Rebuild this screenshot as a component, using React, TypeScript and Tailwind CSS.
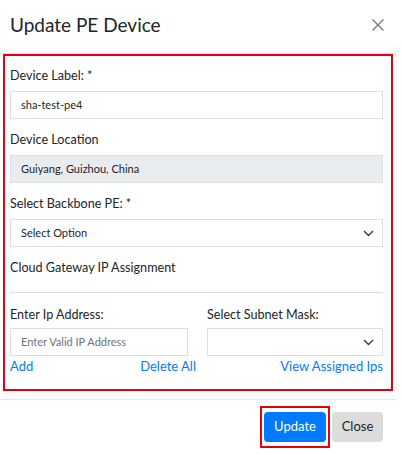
const font = { fontFamily: 'Lato, "Noto Sans", Arial, sans-serif' }

const Chevron = () => (
  <svg width="11" height="7" viewBox="0 0 11 7" fill="none" className="shrink-0">
    <path d="M1 1l4.5 4.5L10 1" stroke="#343a40" strokeWidth="1.4" />
  </svg>
)

const Label = ({ children, className = '' }: { children: React.ReactNode; className?: string }) => (
  <div className={`text-[12.6px] font-normal leading-[20px] text-[#212529] ${className}`}>{children}</div>
)

const TextBox = ({ value, muted, disabled, className = '' }: { value: string; muted?: boolean; disabled?: boolean; className?: string }) => (
  <div
    className={`flex h-[28px] items-center border border-[#dcdfe3] px-[10px] text-[11px] ${
      disabled ? 'bg-[#e9ecef]' : 'bg-white'
    } ${muted ? 'text-[#6c757d]' : 'text-[#212529]'} ${className}`}
  >
    {value}
  </div>
)

const SelectBox = ({ value, className = '' }: { value?: string; className?: string }) => (
  <div
    className={`flex h-[28px] items-center justify-between border border-[#dcdfe3] bg-white pl-[10px] pr-[8px] text-[11px] text-[#212529] ${className}`}
  >
    <span>{value}</span>
    <Chevron />
  </div>
)

export default function App() {
  return (
    <div className="h-[455px] w-[402px] bg-white" style={font}>
      <div className="w-[396px]">
        <header className="flex h-[54px] items-center justify-between border-b border-[#e5e7ea] pb-[4px] pl-[10px] pr-[12px]">
          <h1 className="text-[19px] font-normal leading-[20px] text-[#212529]">Update PE Device</h1>
          <button className="flex h-[12px] w-[12px] items-center justify-center">
            <svg width="12" height="12" viewBox="0 0 12 12">
              <path d="M0.5 0.5l11 11M11.5 0.5l-11 11" stroke="#6c757d" strokeWidth="1.2" />
            </svg>
          </button>
        </header>

        <div className="pb-[8px] pl-[3px] pr-[3px]">
          <div className="border-[2px] border-[#e4000f] pb-[13px] pl-[5px] pr-[8px] pt-[10px]">
            <Label className="mb-[5px]">Device Label: *</Label>
            <TextBox value="sha-test-pe4" className="mb-[11px]" />

            <Label className="mb-[5px]">Device Location</Label>
            <TextBox value="Guiyang, Guizhou, China" disabled className="mb-[11px]" />

            <Label className="mb-[5px]">Select Backbone PE: *</Label>
            <SelectBox value="Select Option" className="mb-[11px]" />

            <Label>Cloud Gateway IP Assignment</Label>
            <div className="mb-[12px] mt-[14px] border-t border-[#dddddd]" />

            <div className="grid grid-cols-[186px_176px] gap-x-[11px]">
              <div>
                <Label className="mb-[3px]">Enter Ip Address:</Label>
                <TextBox value="Enter Valid IP Address" muted className="w-[178px]" />
                <div className="flex justify-between text-[13px] leading-[20px] text-[#007bff]">
                  <a>Add</a>
                  <a>Delete All</a>
                </div>
              </div>
              <div>
                <Label className="mb-[3px]">Select Subnet Mask:</Label>
                <SelectBox />
                <div className="flex justify-end text-[13px] leading-[20px] text-[#007bff]">
                  <a>View Assigned Ips</a>
                </div>
              </div>
            </div>
          </div>
        </div>

        <footer className="flex items-center justify-end gap-[2px] border-t border-[#e5e7ea] pr-[13px] pt-[6px]">
          <div className="border-[2px] border-[#e4000f] px-[2px] py-[4px]">
            <button className="h-[30px] w-[62px] rounded-[4px] bg-[#007bff] text-[13px] text-white">Update</button>
          </div>
          <button className="h-[30px] w-[51px] rounded-[4px] bg-[#dcdcdc] text-[13px] text-[#212529]">Close</button>
        </footer>
      </div>
    </div>
  )
}
